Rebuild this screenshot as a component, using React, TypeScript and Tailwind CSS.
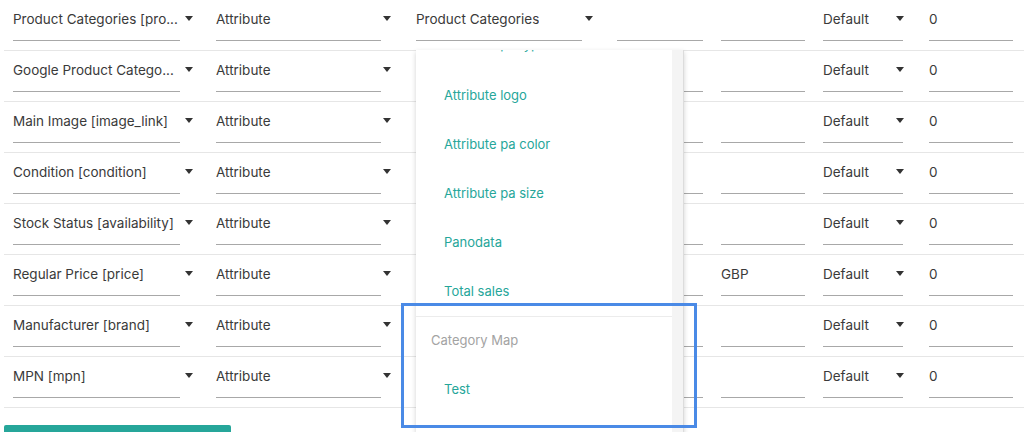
import React from "react";

const rows = [
  { field: "Product Categories [pro...", col3: "Product Categories", col5: "" },
  { field: "Google Product Catego...", col3: "", col5: "" },
  { field: "Main Image [image_link]", col3: "", col5: "" },
  { field: "Condition [condition]", col3: "", col5: "" },
  { field: "Stock Status [availability]", col3: "", col5: "" },
  { field: "Regular Price [price]", col3: "", col5: "GBP" },
  { field: "Manufacturer [brand]", col3: "", col5: "" },
  { field: "MPN [mpn]", col3: "", col5: "" },
];

const attributes = [
  "Attribute logo",
  "Attribute pa color",
  "Attribute pa size",
  "Panodata",
  "Total sales",
];

function Caret({ className }: { className: string }) {
  return (
    <svg
      className={`absolute top-[16px] ${className}`}
      width="8"
      height="5"
      viewBox="0 0 8 5"
    >
      <path d="M0 0h8L4 5z" fill="#333" />
    </svg>
  );
}

function Cell({
  className,
  text,
  caret,
}: {
  className: string;
  text?: string;
  caret?: string;
}) {
  return (
    <div
      className={`relative shrink-0 h-[41px] border-b border-[#a8a8a8] flex items-center pb-[2px] ${className}`}
    >
      <span className="whitespace-nowrap overflow-hidden">{text}</span>
      {caret && <Caret className={caret} />}
    </div>
  );
}

export default function App() {
  return (
    <div
      className="relative h-[432px] w-[1024px] overflow-hidden bg-white text-[13.5px] text-[#3a3a3a]"
      style={{ fontFamily: "Inter, 'Liberation Sans', sans-serif" }}
    >
      {/* Mapping rows */}
      <div className="ml-[4px]">
        {rows.map((r, i) => (
          <div key={i} className="flex h-[51px] border-b border-[#e6e6e6]">
            <Cell className="ml-[9px] w-[167px]" text={r.field} caret="-right-[13px]" />
            <Cell className="ml-[36px] w-[165px]" text="Attribute" caret="-right-[10px]" />
            <Cell className="ml-[35px] w-[166px]" text={r.col3} caret="-right-[11px]" />
            <Cell className="ml-[35px] w-[86px]" />
            <Cell className="ml-[18px] w-[84px]" text={r.col5} />
            <Cell className="ml-[18px] w-[80px]" text="Default" caret="-right-[1px]" />
            <Cell className="ml-[26px] w-[84px]" text="0" />
          </div>
        ))}
      </div>

      <div className="ml-[4px] mt-[17px] h-[36px] w-[227px] rounded-[2px] bg-[#26a69a]" />

      {/* Open dropdown, scrolled part way down its list */}
      <div className="absolute left-[416px] top-[50px] h-[400px] w-[268px] overflow-hidden bg-white shadow-[0_2px_5px_rgba(0,0,0,0.18)]">
        <div className="flex h-full">
          <div className="flex-1 text-[13px]">
            <div className="flex h-[21px] items-start pl-[28px] text-[#26a69a]">
              <span className="-mt-[14px] leading-[16px]">Attribute pa type</span>
            </div>
            {attributes.map((a) => (
              <div key={a} className="flex h-[49px] items-center pl-[28px] text-[#26a69a]">
                {a}
              </div>
            ))}
            <div className="h-[1px] bg-[#ececec]" />
            <div className="flex h-[48px] items-center pl-[15px] text-[#a3a3a3]">
              Category Map
            </div>
            <div className="flex h-[49px] items-center pl-[28px] text-[#26a69a]">Test</div>
          </div>
          <div className="w-[12px] shrink-0 border-r border-[#dcdcdc] bg-[#f4f4f4]" />
        </div>
      </div>

      {/* Highlight box */}
      <div className="absolute left-[401px] top-[303px] h-[125px] w-[296px] border-[3px] border-[#4a8ae6]" />
    </div>
  );
}
